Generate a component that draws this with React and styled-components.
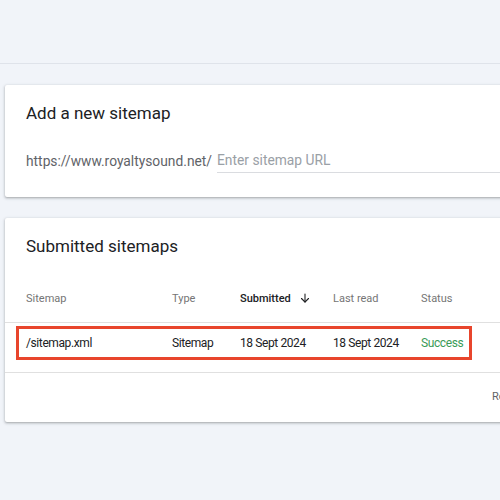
import React from 'react'
import styled, { createGlobalStyle } from 'styled-components'

const GlobalStyle = createGlobalStyle`
  html, body {
    margin: 0;
    padding: 0;
    background: #f1f4f9;
    font-family: Roboto, "Liberation Sans", sans-serif;
    overflow: hidden;
  }
`

const Page = styled.div`
  width: 500px;
  height: 500px;
  overflow: hidden;
  background: #f1f4f9;
`
const TopBar = styled.div`
  height: 63px;
  border-bottom: 1px solid #dfe3ea;
  background: #f1f4f9;
`
const Content = styled.div`
  display: flex;
  flex-direction: column;
  gap: 21px;
  padding: 21px 0 0 5px;
`
const Card = styled.div`
  width: 620px;
  background: #fff;
  border-radius: 2px;
  box-shadow: 0 1px 2px rgba(60, 64, 67, 0.3), 0 1px 3px 1px rgba(60, 64, 67, 0.12);
  position: relative;
`
const Title = styled.h2`
  margin: 0;
  padding: 16px 21px 0;
  font-size: 17px;
  font-weight: 400;
  line-height: 24px;
  color: #202124;
`
const UrlRow = styled.div`
  display: flex;
  align-items: flex-end;
  padding: 25px 21px 24px;
`
const Prefix = styled.span`
  font-size: 13.8px;
  color: #5f6368;
  line-height: 20px;
  padding-bottom: 2px;
  margin-right: 5px;
`
const UrlInput = styled.input`
  flex: 1;
  border: none;
  border-bottom: 1px solid #dadce0;
  outline: none;
  font-family: inherit;
  font-size: 13.8px;
  color: #202124;
  padding: 0 0 2px 0;
  line-height: 20px;
  &::placeholder {
    color: #9aa0a6;
  }
`
const Table = styled.div`
  margin-top: 16px;
`
const Row = styled.div`
  display: grid;
  grid-template-columns: 146px 68px 93px 88px 1fr;
  align-items: center;
  padding-left: 21px;
  padding-bottom: ${p => p.$shift || 0}px;
  box-sizing: border-box;
  height: ${p => p.$h}px;
  border-bottom: 1px solid #e0e0e0;
`
const HeadCell = styled.div`
  font-size: 11px;
  color: ${p => (p.$active ? '#202124' : '#757575')};
  font-weight: ${p => (p.$active ? 500 : 400)};
  display: flex;
  align-items: center;
  gap: 8px;
`
const Cell = styled.div`
  font-size: 12px;
  letter-spacing: -0.4px;
  color: ${p => p.$color || '#202124'};
`
const Footer = styled.div`
  height: 49px;
  display: flex;
  align-items: center;
  padding-left: 487px;
  padding-bottom: 2px;
  box-sizing: border-box;
`
const FooterText = styled.span`
  font-size: 11px;
  color: #5f6368;
  white-space: nowrap;
`
const Highlight = styled.div`
  position: absolute;
  left: 11px;
  top: 108px;
  width: 456px;
  height: 34px;
  box-sizing: border-box;
  border: 3px solid #e8452c;
  pointer-events: none;
`

const columns = ['Sitemap', 'Type', 'Submitted', 'Last read', 'Status']

const ArrowDown = () => (
  <svg width="12" height="12" viewBox="0 0 24 24" fill="none" stroke="#202124" strokeWidth="2.2" strokeLinecap="round" strokeLinejoin="round">
    <path d="M12 4v16" />
    <path d="M5 13l7 7 7-7" />
  </svg>
)

const App = () => {
  return (
    <Page>
      <GlobalStyle />
      <TopBar />
      <Content>
        <Card>
          <Title>Add a new sitemap</Title>
          <UrlRow>
            <Prefix>https://www.royaltysound.net/</Prefix>
            <UrlInput placeholder="Enter sitemap URL" />
          </UrlRow>
        </Card>
        <Card>
          <Title>Submitted sitemaps</Title>
          <Table>
            <Row $h={49}>
              {columns.map(c => (
                <HeadCell key={c} $active={c === 'Submitted'}>
                  {c}
                  {c === 'Submitted' && <ArrowDown />}
                </HeadCell>
              ))}
            </Row>
            <Row $h={50} $shift={10}>
              <Cell>/sitemap.xml</Cell>
              <Cell>Sitemap</Cell>
              <Cell>18 Sept 2024</Cell>
              <Cell>18 Sept 2024</Cell>
              <Cell $color="#3b9b57">Success</Cell>
            </Row>
          </Table>
          <Footer>
            <FooterText>Rows per page:</FooterText>
          </Footer>
          <Highlight />
        </Card>
      </Content>
    </Page>
  )
}

export default App
